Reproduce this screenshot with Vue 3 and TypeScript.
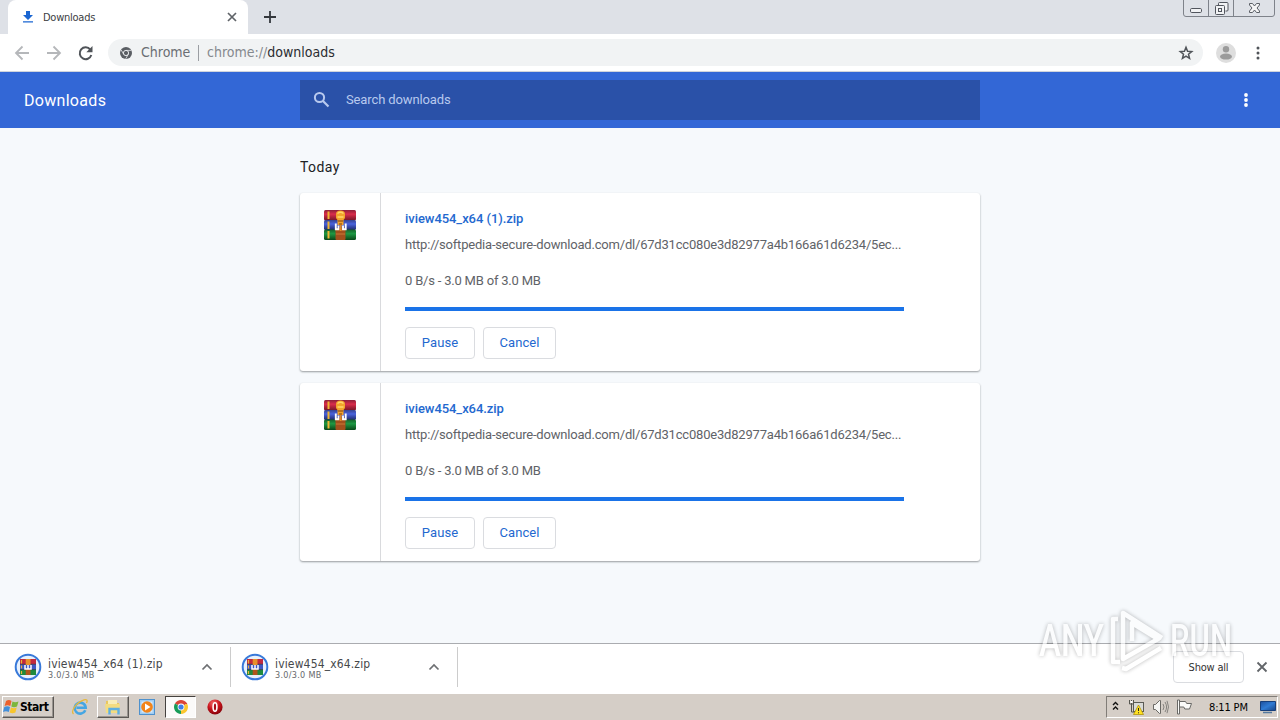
<script setup lang="ts">
interface DownloadItem {
  name: string
  url: string
  status: string
  percent: number
  shelfSize: string
}

const url = 'http://softpedia-secure-download.com/dl/67d31cc080e3d82977a4b166a61d6234/5ec...'
const downloads: DownloadItem[] = [
  { name: 'iview454_x64 (1).zip', url, status: '0 B/s - 3.0 MB of 3.0 MB', percent: 100, shelfSize: '3.0/3.0 MB' },
  { name: 'iview454_x64.zip', url, status: '0 B/s - 3.0 MB of 3.0 MB', percent: 100, shelfSize: '3.0/3.0 MB' },
]
</script>

<template>
  <div class="screen">
    <!-- Shared gradients and the archive icon symbol -->
    <svg class="defs" width="0" height="0">
      <defs>
        <linearGradient id="bookRed" x1="0" y1="0" x2="0" y2="1">
          <stop offset="0" stop-color="#8d2038" /><stop offset=".4" stop-color="#d92d4b" /><stop offset="1" stop-color="#721526" />
        </linearGradient>
        <linearGradient id="bookBlue" x1="0" y1="0" x2="0" y2="1">
          <stop offset="0" stop-color="#36428f" /><stop offset=".4" stop-color="#4a63dc" /><stop offset="1" stop-color="#1d2969" />
        </linearGradient>
        <linearGradient id="bookGreen" x1="0" y1="0" x2="0" y2="1">
          <stop offset="0" stop-color="#175f2a" /><stop offset=".4" stop-color="#1d9843" /><stop offset="1" stop-color="#0a4618" />
        </linearGradient>
        <radialGradient id="operaRed" cx=".4" cy=".25" r=".8">
          <stop offset="0" stop-color="#f26a6a" /><stop offset=".5" stop-color="#c9141c" /><stop offset="1" stop-color="#7d0008" />
        </radialGradient>
        <linearGradient id="screenBlue" x1="0" y1="0" x2="1" y2="1">
          <stop offset="0" stop-color="#1d4f9c" /><stop offset=".5" stop-color="#2f7bd4" /><stop offset="1" stop-color="#174486" />
        </linearGradient>
      </defs>
      <symbol id="archive" viewBox="0 0 32 32">
        <rect x="0" y="1" width="32" height="10.5" rx="1.5" fill="url(#bookRed)" />
        <rect x="0" y="11" width="32" height="10" rx="1.5" fill="url(#bookBlue)" />
        <rect x="0" y="20.5" width="32" height="10.5" rx="1.5" fill="url(#bookGreen)" />
        <path d="M3.500 2.500h2v7.500h-2zM3.500 12.500h2v7.500h-2zM3.500 22h2v7.500h-2z" fill="#f0b532" />
        <rect x="11.500" y="19" width="10" height="12" rx="1" fill="#a2501d" />
        <path d="M12 5q0-3.500 4.500-3.500T21 5v4l-1.500 2v5h-6v-5L12 9z" fill="#f2a32b" />
        <path d="M13.500 4.500q3-2.500 6 0M13.500 8h6" stroke="#ffd76a" stroke-width="1.300" fill="none" />
        <path d="M14 12h5M15 15h3" stroke="#7d3f12" stroke-width="1.200" />
        <path d="M11.800 14.500v5.700h2.700v-3.700M21.700 14.500v5.700H19v-3.700" fill="none" stroke="#fff" stroke-width="1.900" />
        <path d="M16.700 16v6" stroke="#e08a2a" stroke-width="2" />
        <path d="M12 25h9" stroke="#c97a38" />
      </symbol>
      <symbol id="archiveSmall" viewBox="0 0 16 16">
        <path d="M0 0h16v5.300H0z" fill="#c22a3f" /><path d="M0 5.300h16v5.200H0z" fill="#3f57c4" /><path d="M0 10.500h16V16H0z" fill="#1f8a3d" />
        <path d="M0 5.300h16M0 10.600h16" stroke="#26304e" stroke-width=".8" />
        <path d="M1.500 1v3.500M1.500 6.500v3M1.500 12v3" stroke="#e8b33a" stroke-width="1.200" />
        <path d="M5.700 0h4.800v6H5.700z" fill="#e8902b" /><path d="M5.700 10h4.800v6H5.700z" fill="#b0561c" />
        <path d="M5 6v4h6V6M8 6v4" fill="none" stroke="#fff" stroke-width="1.500" />
      </symbol>
    </svg>

    <header class="tabstrip">
      <div class="tab">
        <svg class="tab-icon" width="12" height="12" viewBox="0 0 12 12"><path d="M4 0h4v4h3L6 9 1 4h3zM1 10.300h10v1.300H1z" fill="#1a66d2" /></svg>
        <span class="tab-title">Downloads</span>
        <svg width="10" height="10" viewBox="0 0 10 10"><path d="M1 1l8 8M9 1l-8 8" stroke="#5f6368" stroke-width="1.700" /></svg>
      </div>
      <svg class="new-tab" width="14" height="14" viewBox="0 0 14 14"><path d="M7 1v12M1 7h12" stroke="#34383d" stroke-width="1.800" /></svg>
      <svg class="window-buttons" width="95" height="18" viewBox="0 0 95 18">
        <path d="M1.500 0v14q0 2.500 2.500 2.500h86q2.500 0 2.500-2.500V0M26.500 0v16M51.500 0v16" fill="none" stroke="#7e828a" />
        <rect x="8.500" y="8.500" width="11" height="4" rx="1.200" fill="#f1f2f4" stroke="#51555d" />
        <path d="M36.500 5V3.500q0-1 1-1H45q1 0 1 1V10q0 1-1 1h-1.500" fill="#f1f2f4" stroke="#51555d" />
        <rect x="33.500" y="5.500" width="9" height="9" rx="1" fill="#f1f2f4" stroke="#51555d" />
        <rect x="36.500" y="8.500" width="3" height="3" fill="none" stroke="#51555d" />
        <path d="M67.500 3.500h3l2 2.500 2-2.500h3v1.500L75 8l2.500 3v1.500h-3l-2-2.500-2 2.500h-3V11L70 8l-2.500-3z" fill="#f5f5f6" stroke="#5b5f66" />
      </svg>
    </header>

    <div class="toolbar">
      <svg class="nav" width="96" height="20" viewBox="0 0 96 20">
        <path d="M15 10H2M8.500 3.500L2 10l6.500 6.500" fill="none" stroke="#b5b7ba" stroke-width="1.800" />
        <path d="M33 10h12.500M39.500 3.500L46 10l-6.500 6.500" fill="none" stroke="#b5b7ba" stroke-width="1.800" />
        <path d="M76.300 6.600A5.900 5.900 0 1 0 77.300 12" fill="none" stroke="#505459" stroke-width="2" />
        <path d="M78.500 3v6.200h-6.200z" fill="#505459" />
      </svg>
      <div class="omnibox">
        <svg width="12" height="12" viewBox="0 0 12 12">
          <circle cx="6" cy="6" r="6" fill="#5a5e63" /><circle cx="6" cy="6" r="2.600" fill="none" stroke="#e9ebed" stroke-width="1" />
          <path d="M6 3.400h5.300M3.700 7.300L1.200 3M8.300 7.300L5.700 11.800" stroke="#e9ebed" stroke-width=".8" />
        </svg>
        <span class="origin">Chrome</span>
        <i class="sep"></i>
        <span class="address"><span class="scheme">chrome://</span>downloads</span>
        <svg class="star" width="16" height="16" viewBox="0 0 16 16"><path d="M8 2.300l1.550 3.900 4.200.3-3.250 2.700 1.050 4.100L8 11.100l-3.550 2.200L5.500 9.200 2.250 6.500l4.200-.3z" fill="none" stroke="#505459" stroke-width="1.500" /></svg>
      </div>
      <svg class="avatar" width="20" height="20" viewBox="0 0 20 20"><circle cx="10" cy="10" r="10" fill="#dedede" /><circle cx="10" cy="6.300" r="3.200" fill="#9b9b9b" /><ellipse cx="10" cy="13.600" rx="6" ry="3" fill="#9b9b9b" /></svg>
      <svg class="menu" width="4" height="14" viewBox="0 0 4 14"><g fill="#505459"><circle cx="2" cy="2" r="1.500" /><circle cx="2" cy="7" r="1.500" /><circle cx="2" cy="12" r="1.500" /></g></svg>
    </div>

    <div class="page-header">
      <h1>Downloads</h1>
      <div class="search">
        <svg width="18" height="18" viewBox="0 0 18 18"><circle cx="6.500" cy="6.500" r="4.600" fill="none" stroke="#b8c9ee" stroke-width="2" /><path d="M10 10l5.500 5.500" stroke="#b8c9ee" stroke-width="2.200" /></svg>
        <span>Search downloads</span>
      </div>
      <svg class="more" width="4" height="16" viewBox="0 0 4 16"><g fill="#fff"><circle cx="2" cy="3" r="1.900" /><circle cx="2" cy="8" r="1.900" /><circle cx="2" cy="13" r="1.900" /></g></svg>
    </div>

    <main class="content">
      <h2>Today</h2>
      <article v-for="item in downloads" :key="item.name" class="card">
        <div class="file-icon"><svg width="32" height="32"><use href="#archive" /></svg></div>
        <div class="details">
          <a class="name">{{ item.name }}</a>
          <div class="url">{{ item.url }}</div>
          <div class="status">{{ item.status }}</div>
          <div class="track"><div class="bar" :style="{ width: item.percent + '%' }"></div></div>
          <div class="actions"><button class="pause">Pause</button><button class="cancel">Cancel</button></div>
        </div>
      </article>
    </main>

    <footer class="shelf">
      <div v-for="item in downloads" :key="item.name" class="shelf-item">
        <svg width="28" height="28" viewBox="0 0 28 28"><circle cx="14" cy="14" r="12.300" fill="#e8f1fc" stroke="#3879d9" stroke-width="2" /><use href="#archiveSmall" x="6" y="6" width="16" height="16" /></svg>
        <div class="shelf-text"><div class="shelf-name">{{ item.name }}</div><div class="shelf-size">{{ item.shelfSize }}</div></div>
        <svg class="chevron" width="12" height="8" viewBox="0 0 12 8"><path d="M1.500 6.500L6 2l4.500 4.500" fill="none" stroke="#6d6f72" stroke-width="1.700" /></svg>
      </div>
      <button class="show-all">Show all</button>
      <svg class="shelf-close" width="12" height="12" viewBox="0 0 12 12"><path d="M1.500 1.500l9 9M10.500 1.500l-9 9" stroke="#626569" stroke-width="1.800" /></svg>
    </footer>

    <div class="taskbar">
      <div class="start">
        <svg width="17" height="16" viewBox="0 0 17 16">
          <path d="M3 2q3-2 5.500 0L7.300 7Q4.500 5.500 1.600 7z" fill="#ec612d" /><path d="M9.500 2.500q2.500 1.500 6 0L14 7.500q-3 1.500-5.700 0z" fill="#7cb63c" />
          <path d="M1.300 8q3-1.500 5.700 0l-1.200 5Q3 11.700 0 13z" fill="#428fda" /><path d="M8 8.500q3 1.500 5.700 0l-1.300 5q-3 1.500-5.700 0z" fill="#f7c52c" />
        </svg>
        <b>Start</b>
      </div>
      <div class="task ie">
        <svg width="18" height="18" viewBox="0 0 18 18"><path d="M14.300 12.200A5.500 5.500 0 1 1 14.700 9.800H5.500" fill="none" stroke="#45a6e3" stroke-width="2.600" /><path d="M2.500 16C-.5 13 5 4.500 13 1.800q4.500-1 2.500 3.200" fill="none" stroke="#e7b83b" stroke-width="1.300" /></svg>
      </div>
      <div class="task raised">
        <svg width="18" height="16" viewBox="0 0 18 16"><path d="M2 2h6l1 2h6v10H2z" fill="#e9c75e" /><path d="M4 1h9v8H4z" fill="#f8edb7" /><path d="M1 5h15l-1 9H2z" fill="#f3dc80" /><path d="M5.500 15.500V10h9v5.500" fill="none" stroke="#5dafe1" stroke-width="2.400" /></svg>
      </div>
      <div class="task media">
        <svg width="16" height="16" viewBox="0 0 16 16"><rect x=".5" y=".5" width="15" height="15" fill="#9fcdf2" stroke="#4e91cd" /><rect x="2.500" y="2.500" width="11" height="11" fill="#d6eafb" /><circle cx="8" cy="8" r="5.800" fill="#f28419" /><path d="M6 4.500v7L11.500 8z" fill="#fff" /></svg>
      </div>
      <div class="task pressed">
        <svg width="14" height="14" viewBox="0 0 14 14"><path d="M7 7L.94 3.500A7 7 0 0 1 13.060 3.500z" fill="#db4437" /><path d="M7 7L.94 3.500A7 7 0 0 0 7 14z" fill="#179c58" /><path d="M7 7l6.060-3.500A7 7 0 0 1 7 14z" fill="#fbc62f" /><path d="M7 3.500h6.060" stroke="#db4437" /><circle cx="7" cy="7" r="3.400" fill="#fff" /><circle cx="7" cy="7" r="2.600" fill="#3f7ee8" /></svg>
      </div>
      <div class="task opera">
        <svg width="16" height="16" viewBox="0 0 16 16"><circle cx="8" cy="8" r="7.600" fill="url(#operaRed)" /><ellipse cx="8" cy="8" rx="1.900" ry="4.200" fill="#a80d17" stroke="#fff" stroke-width="1.600" /></svg>
      </div>
      <div class="tray">
        <svg class="expand" width="7" height="10" viewBox="0 0 7 10"><path d="M1 4l2.500-2.500L6 4M1 8.500L3.500 6 6 8.500" fill="none" stroke="#111" stroke-width="1.400" /></svg>
        <svg class="network" width="16" height="16" viewBox="0 0 16 16">
          <rect x="5.500" y="3.500" width="10" height="9" fill="#d9dbd8" stroke="#5b5b56" /><path d="M1.500 1v4h4V1M3.500 1v12H8" fill="none" stroke="#55554f" /><path d="M2.500 2v2h2V2z" fill="#fff" /><path d="M10.500 6l5 9.500h-10z" fill="#ffe122" stroke="#a88900" stroke-width=".7" /><path d="M10.500 9v3M10.500 13.300v1" stroke="#222" />
        </svg>
        <svg class="sound" width="17" height="16" viewBox="0 0 17 16"><path d="M1.500 5.500h2l4-4h1v13h-1l-4-4h-2z" fill="#f5f5f3" stroke="#6a6965" /><path d="M11 5q2 3 0 6M13 3q3.200 5 0 10M15 1.800q3 6 0 12.400" fill="none" stroke="#85837f" /></svg>
        <svg class="flag" width="17" height="16" viewBox="0 0 17 16"><path d="M1.500 1v14h2V1zM3.500 2.500h6l1.200 2h4.800l-2 5.500H8.800l-1-2H3.500z" fill="#fbfbf9" stroke="#696966" /></svg>
        <span class="clock">8:11 PM</span>
        <svg class="desktop" width="16" height="14" viewBox="0 0 16 14"><path d="M.5 1.500h15v9h-15z" fill="url(#screenBlue)" stroke="#173f7b" /><path d="M3 12.500h9" stroke="#55799e" stroke-width="1.500" /></svg>
      </div>
    </div>

    <!-- Watermark floating above the page and shelf -->
    <svg class="watermark" width="210" height="76" viewBox="0 0 210 76">
      <g class="mark-text"><text x="7" y="54" textLength="65" lengthAdjust="spacingAndGlyphs">ANY</text><text x="138" y="54" textLength="62" lengthAdjust="spacingAndGlyphs">RUN</text></g>
      <g fill="none" stroke="#fff" stroke-width="4.500" stroke-linejoin="round">
        <path d="M86 17h-5v43h7" /><path d="M130 36L91 11v46l35-20-26-16v18" /><path d="M90 66l4 1 35-21" />
      </g>
    </svg>
  </div>
</template>

<style>
html, body { margin: 0; overflow: hidden; }
</style>

<style scoped>
* { box-sizing: border-box; }
.screen { position: relative; display: flex; flex-direction: column; width: 1280px; height: 720px; overflow: hidden; background: #f6f9fc; font-family: Roboto, "Liberation Sans", sans-serif; }
.defs { position: absolute; }
svg { display: block; flex: none; }
button { padding: 0; font-family: inherit; background: #fff; border: 1px solid #dadce0; border-radius: 4px; }
.tabstrip { display: flex; height: 34px; flex: none; background: #dee1e7; }
.tab { display: flex; align-items: center; width: 240px; height: 34px; margin-left: 8px; padding: 0 11px 0 14px; background: #fff; border-radius: 8px 8px 0 0; }
.tab-title { flex: 1; margin-left: 9px; font: 11px "DejaVu Sans Condensed", "DejaVu Sans", sans-serif; letter-spacing: -.25px; color: #3c4043; }
.new-tab { margin: 10px 0 0 15px; }
.window-buttons { margin-left: auto; margin-right: 3px; }
.toolbar { display: flex; align-items: center; height: 38px; flex: none; background: #fff; border-bottom: 1px solid #d0d4dc; }
.nav { margin-left: 14px; }
.omnibox { display: flex; align-items: center; width: 1095px; height: 27px; margin-left: -2px; padding: 0 9px 0 12px; border-radius: 14px; background: #f1f3f4; font: 14px "DejaVu Sans Condensed", "DejaVu Sans", sans-serif; }
.origin { width: 50px; margin: -2px 0 0 9px; letter-spacing: 0; color: #6a6e73; }
.sep { width: 1px; height: 16px; margin: 0 8px 0 7px; background: #9b9ea3; }
.address { margin-top: -2px; letter-spacing: 0; color: #2b2d31; }
.scheme { color: #85898e; }
.star { margin-left: auto; }
.avatar { margin-left: 13px; }
.menu { margin-left: 20px; }
.page-header { display: flex; align-items: center; height: 56px; flex: none; color: #fff; background: #3367d6; }
h1 { width: 276px; margin: 0 0 0 24px; font-size: 16px; font-weight: 400; letter-spacing: .3px; }
.search { display: flex; align-items: center; width: 680px; height: 40px; padding-left: 14px; background: #2a51a8; }
.search svg { margin-left: -1px; }
.search span { margin: -2px 0 0 15px; font-size: 13px; letter-spacing: -.12px; color: #b8c9ee; }
.more { margin-left: 264px; }
.content { flex: 1; width: 680px; margin: 0 auto; }
h2 { height: 20px; margin: 29px 0 16px; font-size: 14px; line-height: 20px; font-weight: 400; letter-spacing: .4px; color: #202124; }
.card { display: flex; height: 178px; margin-bottom: 12px; border-radius: 3px; background: #fff; box-shadow: 0 1px 2px rgba(60,64,67,.42), 0 1px 2px rgba(60,64,67,.12); }
.file-icon { width: 81px; padding: 16px 0 0 24px; border-right: 1px solid #d9dadd; }
.details { width: 523px; padding: 16px 0 0 24px; font-size: 13px; color: #5f6368; }
.name { display: block; height: 20px; line-height: 20px; font-weight: 500; letter-spacing: -.06px; color: #2368cf; }
.url { margin-top: 6px; line-height: 20px; letter-spacing: -.195px; white-space: nowrap; }
.status { margin-top: 16px; line-height: 20px; letter-spacing: -.2px; }
.track { height: 4px; margin-top: 16px; background: #d2e3fc; }
.bar { height: 4px; background: #1a73e8; }
.actions { display: flex; gap: 8px; margin-top: 16px; }
.actions button { height: 32px; padding-bottom: 2px; font-size: 13px; letter-spacing: .1px; color: #2368cf; }
.pause { width: 70px; }
.cancel { width: 73px; }
.shelf { display: flex; align-items: center; height: 50px; flex: none; padding-bottom: 3px; background: #fff; border-top: 1px solid #aaacb0; }
.shelf-item { display: flex; align-items: center; width: 231px; height: 40px; padding: 0 17px 0 14px; border-right: 1px solid #ccc; }
.shelf-item + .shelf-item { width: 227px; padding-left: 10px; }
.shelf-text { margin: 3px 0 0 6px; font-family: "DejaVu Sans Condensed", "DejaVu Sans", sans-serif; }
.shelf-name { font-size: 12px; line-height: 12px; letter-spacing: .15px; color: #46484b; }
.shelf-size { font-size: 9px; line-height: 10px; letter-spacing: .3px; color: #66686b; }
.chevron { margin-left: auto; }
.show-all { width: 71px; height: 32px; margin-left: auto; font: 11px "DejaVu Sans Condensed", "DejaVu Sans", sans-serif; letter-spacing: -.2px; color: #333; }
.shelf-close { margin: 0 12px; }
.taskbar { display: flex; align-items: center; height: 27px; flex: none; border-top: 1px solid #fff; background: #d5cec7; }
.start { display: flex; align-items: center; width: 52px; height: 22px; margin-left: 2px; border: 1px solid; border-color: #fff #5c5854 #5c5854 #fff; box-shadow: inset -1px -1px #999590; font: 12px "DejaVu Sans Condensed", "DejaVu Sans", sans-serif; color: #000; }
.start b { letter-spacing: -.45px; }
.task { display: flex; align-items: center; justify-content: center; height: 22px; }
.ie { width: 18px; margin-left: 17px; }
.raised { width: 32px; margin-left: 8px; border: 1px solid; border-color: #fff #5c5854 #5c5854 #fff; box-shadow: inset -1px -1px #999590; }
.media { width: 16px; margin-left: 10px; }
.pressed { width: 31px; margin-left: 10px; border: 1px solid; border-color: #45423f #fff #fff #45423f; background: #fbfaf9; }
.opera { width: 16px; margin-left: 11px; }
.tray { display: flex; align-items: center; width: 172px; height: 22px; margin: 0 2px 0 auto; border: 1px solid; border-color: #817d78 #fff #fff #817d78; }
.expand { margin: -2px 0 0 5px; }
.network { margin-left: 9px; }
.sound { margin-left: 8px; }
.flag { margin-left: 7px; }
.clock { width: 41px; margin-left: 16px; font: 11px "DejaVu Sans Condensed", "DejaVu Sans", sans-serif; letter-spacing: -.15px; white-space: nowrap; color: #000; }
.desktop { margin-left: 10px; }
.watermark { position: absolute; left: 1032px; top: 602px; overflow: visible; opacity: .62; filter: drop-shadow(0 0 2px rgba(0,0,0,.45)); }
.mark-text { font: 500 45px Roboto, sans-serif; fill: #fff; }
</style>
